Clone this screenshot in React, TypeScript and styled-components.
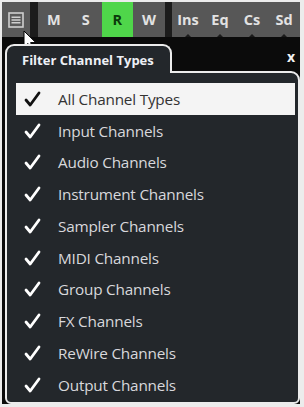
import styled, { createGlobalStyle } from 'styled-components';

const GlobalStyle = createGlobalStyle`
    html,
    body {
        margin: 0;
        padding: 0;
        background: #ececec;
    }
`;

const StyledScreen = styled.div`
    position: relative;
    width: 304px;
    height: 407px;
    padding: 2px 4px 3px 2px;
    box-sizing: border-box;
    display: flex;
    flex-direction: column;
    font-family: 'Open Sans', 'Noto Sans', sans-serif;
    overflow: hidden;
`;

const Toolbar = styled.div`
    display: flex;
    height: 35px;
    gap: 7px;
    background: #1c1c1c;
`;

const Group = styled.div`
    display: flex;
    background: #575757;
`;

const MenuButton = styled.div`
    width: 30px;
    display: flex;
    align-items: center;
    justify-content: center;
    background: #5a5a5a;
    margin-right: 1px;
`;

const ToolButton = styled.div<{ $active?: boolean; $marked?: boolean }>`
    position: relative;
    width: ${({ $marked }) => ($marked ? '32px' : '31.75px')};
    display: flex;
    align-items: center;
    justify-content: center;
    font-size: 14.5px;
    font-weight: 700;
    color: ${({ $active }) => ($active ? '#0b3a0b' : '#e2e2e2')};
    background: ${({ $active }) => ($active ? '#4fd64a' : 'transparent')};

    &::after {
        content: '';
        display: ${({ $marked }) => ($marked ? 'block' : 'none')};
        position: absolute;
        bottom: 0;
        left: 50%;
        margin-left: -3px;
        border: 3px solid transparent;
        border-bottom-color: #1a1a1a;
        border-top: 0;
    }
`;

const Stage = styled.div`
    flex: 1;
    background: #0b0b0b;
    padding: 7px 0 0 3px;
    display: flex;
    flex-direction: column;
`;

const Header = styled.div`
    display: flex;
    align-items: stretch;
    height: 27px;
`;

const Tab = styled.div`
    position: relative;
    z-index: 1;
    width: 167px;
    box-sizing: border-box;
    margin-bottom: -2px;
    padding: 0 0 0 15px;
    border: 2px solid #ececec;
    border-bottom: none;
    border-radius: 9px 9px 0 0;
    background: #23272b;
    display: flex;
    align-items: center;
    font-size: 13px;
    font-weight: 700;
    color: #eef0f6;
    white-space: nowrap;
`;

const HeaderRest = styled.div`
    flex: 1;
    display: flex;
    align-items: center;
    justify-content: flex-end;
    padding-right: 5px;
    padding-bottom: 3px;
`;

const Close = styled.span`
    font-size: 14px;
    font-weight: 700;
    color: #f2f2f2;
`;

const Body = styled.div`
    flex: 1;
    border: 2px solid #ececec;
    border-radius: 0 9px 6px 6px;
    background: #23272b;
    padding: 10px 3px 0 9px;
    display: flex;
    flex-direction: column;
`;

const Row = styled.div<{ $selected?: boolean }>`
    height: 31.75px;
    display: flex;
    align-items: center;
    padding-left: 8px;
    background: ${({ $selected }) => ($selected ? '#f4f4f4' : 'transparent')};
    color: ${({ $selected }) => ($selected ? '#333333' : '#d8d8dc')};
    font-size: 15.3px;
    letter-spacing: -0.2px;
    white-space: nowrap;
`;

const Check = styled.span`
    width: 34px;
    display: flex;
    align-items: center;
`;

const Cursor = styled.svg`
    position: absolute;
    left: 23px;
    top: 30px;
`;

const channelTypes = [
    'All Channel Types',
    'Input Channels',
    'Audio Channels',
    'Instrument Channels',
    'Sampler Channels',
    'MIDI Channels',
    'Group Channels',
    'FX Channels',
    'ReWire Channels',
    'Output Channels',
];

const CheckMark = ({ dark }: { dark: boolean }) => (
    <svg width="17" height="16" viewBox="0 0 17 16">
        <path
            d="M2 9 L6.2 14 L15 2"
            fill="none"
            stroke={dark ? '#111111' : '#ffffff'}
            strokeWidth="2.8"
            strokeLinecap="round"
            strokeLinejoin="round"
        />
    </svg>
);

const App = () => {
    return (
        <StyledScreen>
            <GlobalStyle />
            <Toolbar>
                <MenuButton>
                    <svg width="16" height="16" viewBox="0 0 16 16">
                        <rect x="1" y="1" width="14" height="14" fill="none" stroke="#cfcfcf" strokeWidth="1.6" />
                        <path d="M3.5 5.2 H12.5 M3.5 8 H12.5 M3.5 10.8 H12.5" stroke="#cfcfcf" strokeWidth="1.6" />
                    </svg>
                </MenuButton>
                <Group>
                    <ToolButton>M</ToolButton>
                    <ToolButton>S</ToolButton>
                    <ToolButton $active>R</ToolButton>
                    <ToolButton>W</ToolButton>
                </Group>
                <Group>
                    <ToolButton $marked>Ins</ToolButton>
                    <ToolButton $marked>Eq</ToolButton>
                    <ToolButton $marked>Cs</ToolButton>
                    <ToolButton $marked>Sd</ToolButton>
                </Group>
            </Toolbar>
            <Stage>
                <Header>
                    <Tab>Filter Channel Types</Tab>
                    <HeaderRest>
                        <Close>x</Close>
                    </HeaderRest>
                </Header>
                <Body>
                    {channelTypes.map((name, i) => (
                        <Row key={name} $selected={i === 0}>
                            <Check>
                                <CheckMark dark={i === 0} />
                            </Check>
                            {name}
                        </Row>
                    ))}
                </Body>
            </Stage>
            <Cursor width="14" height="22" viewBox="0 0 14 22">
                <path d="M1 1 L1 17 L5 13.5 L8 20.5 L10.5 19.5 L7.6 12.6 L12.8 12.6 Z" fill="#ffffff" stroke="#000000" strokeWidth="1" strokeLinejoin="round" />
            </Cursor>
        </StyledScreen>
    );
};

export default App;
